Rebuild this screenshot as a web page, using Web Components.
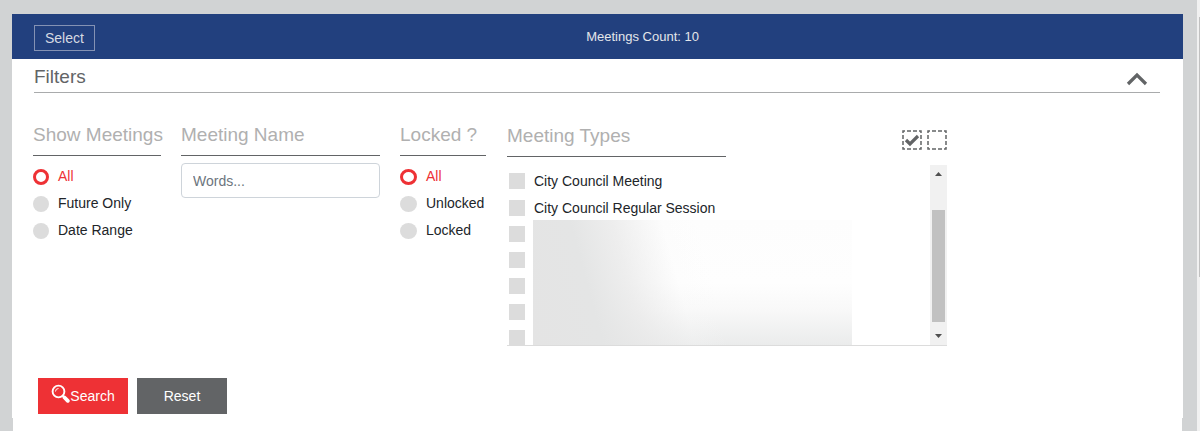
<!DOCTYPE html>
<html lang="en">
<head>
<meta charset="utf-8">
<title>Meetings</title>
<style>
html,body{margin:0;min-height:100%}
body{background:#d1d3d4;color:#212529;font:14px/20px "Liberation Sans",Arial,sans-serif}
</style>
</head>
<body>
<meetings-page>
  <meetings-bar slot="bar"></meetings-bar>
  <filter-panel slot="filters">
    <filter-group heading="Show Meetings" style="--w:128px">
      <choice-item type="radio" name="show" label="All" checked></choice-item>
      <choice-item type="radio" name="show" label="Future Only"></choice-item>
      <choice-item type="radio" name="show" label="Date Range"></choice-item>
    </filter-group>
    <filter-group heading="Meeting Name" style="--w:199px"><name-field></name-field></filter-group>
    <filter-group heading="Locked ?" style="--w:86px">
      <choice-item type="radio" name="locked" label="All" checked></choice-item>
      <choice-item type="radio" name="locked" label="Unlocked"></choice-item>
      <choice-item type="radio" name="locked" label="Locked"></choice-item>
    </filter-group>
    <meeting-types></meeting-types>
    <form-actions slot="actions"></form-actions>
  </filter-panel>
</meetings-page>
<script>
const define = (name, html, setup) => customElements.define(name, class extends HTMLElement {
  connectedCallback() {
    if (this.shadowRoot) return;
    this.attachShadow({mode: 'open'}).innerHTML = html;
    if (setup) setup(this, this.shadowRoot);
  }
});

define('meetings-page', `
<style>
:host{display:grid;grid-template-columns:1fr 3px;min-height:100vh}
main{display:flex;flex-direction:column;padding:14px 14px 0 12px}
.card{background:#fff}
.rest{flex:1;min-height:13px;margin:0 1px;background:#fff}
.track{background:#f1f1f1;padding:17px 0 0 2px}
.thumb{height:260px;background:#c1c1c1}
</style>
<main><div class="card"><slot name="bar"></slot><slot name="filters"></slot></div><div class="rest"></div></main>
<div class="track"><div class="thumb"></div></div>`);

define('meetings-bar', `
<style>
:host{display:grid;grid-template-columns:49% 1fr;align-items:center;height:45px;padding:0 22px;background:#22407e;color:#e4e6ea}
button{justify-self:start;box-sizing:border-box;height:26px;margin-top:2px;padding:0 10px;border:1px solid #8492b4;background:none;color:#d6dae2;font:inherit}
span{font-size:13px}
</style>
<button type="button">Select</button><span>Meetings Count: 10</span>`);

define('filter-panel', `
<style>
:host{display:block;padding:0 23px 4px 21px}
header{display:flex;justify-content:space-between;align-items:center;height:33px;margin-left:1px;border-bottom:1px solid #a9abac}
h1{margin:0;padding-top:2px;font-size:19px;line-height:24px;font-weight:400;color:#626466}
header button{display:flex;border:0;padding:0;margin:6px 12px 0 0;background:none}
.groups{display:flex;flex-wrap:wrap;align-items:flex-start;gap:20px;padding-top:30px}
</style>
<header><h1>Filters</h1><button type="button" aria-label="Collapse filters"><svg width="22" height="14" viewBox="0 0 22 14"><path d="M2 12 11 3l9 9" fill="none" stroke="#626466" stroke-width="3.2"/></svg></button></header>
<div class="groups"><slot></slot></div>
<slot name="actions"></slot>`);

define('filter-group', `
<style>
:host{display:block;width:var(--w)}
h2{margin:0 0 7px;padding-bottom:8px;border-bottom:1px solid #626466;font-size:19px;line-height:24px;font-weight:400;color:#b0b0b0;white-space:nowrap}
</style>
<h2></h2><slot></slot>`, (el, root) => { root.querySelector('h2').textContent = el.getAttribute('heading'); });

define('choice-item', `
<style>
:host{display:block}
label{display:flex;align-items:flex-start;gap:9px;height:27px;white-space:nowrap}
input{appearance:none;box-sizing:border-box;flex:none;width:16px;height:16px;margin:6px 0 0;background:#dcdcdc}
input[type=radio]{border-radius:50%}
input[type=radio]:checked{background:#fff;border:3px solid #ee3135}
input[type=radio]:checked + span{color:#ee3135}
span{line-height:26px}
:host([type=checkbox]) label{height:26px}
:host([type=checkbox]:first-child) label{height:27px}
:host([type=checkbox]) input{margin-top:5px}
:host([name=locked]) input{width:17px}
</style>
<label><input><span></span></label>`, (el, root) => {
  const input = root.querySelector('input');
  input.type = el.getAttribute('type');
  input.name = el.getAttribute('name');
  input.checked = el.hasAttribute('checked');
  root.querySelector('span').textContent = el.getAttribute('label') || '';
  if (!el.getAttribute('label')) input.setAttribute('aria-label', 'Meeting type');
});

define('name-field', `
<style>
:host{display:block}
input{box-sizing:border-box;width:100%;height:35px;padding:0 11px;border:1px solid #ced4da;border-radius:4px;background:#fff;color:#495057;font:inherit}
input::placeholder{color:#6c757d;opacity:1}
</style>
<input type="text" aria-label="Meeting name" placeholder="Words...">`);

define('meeting-types', `
<style>
:host{display:block;width:440px;margin-left:1px}
header{display:flex;justify-content:space-between;align-items:flex-start}
h2{width:219px;margin:0;padding:1px 0 8px;border-bottom:1px solid #626466;font-size:19px;line-height:24px;font-weight:400;color:#b0b0b0}
.tools{display:flex;gap:5px;padding-top:7px}
.tools button{display:flex;padding:0;border:0;background:none}
.list{display:grid;grid-template-columns:1fr 17px;height:180px;margin-top:8px;overflow:hidden;border-bottom:1px solid #dcdcdc}
.items{position:relative;padding:3px 0 0 2px}
.haze{position:absolute;left:26px;top:55px;width:319px;height:126px;
background:linear-gradient(75deg,#e4e4e4 0,#e4e5e5 20%,#e8e8e8bb 32%,#f8f8f833 46%,#ffffff00 56%),linear-gradient(to bottom,#fdfdfd 0,#fefefe 50%,#f9f9f9 70%,#eaebeb 100%)}
.bar{display:flex;flex-direction:column;align-items:center;background:#f1f1f1}
.thumb{width:13px;height:112px;margin-top:28px;background:#c1c1c1}
.bar svg{display:block}
</style>
<header><h2>Meeting Types</h2><div class="tools">
<button type="button" aria-label="Select all"><svg width="20" height="20" viewBox="0 0 20 20" fill="none" stroke="#626466"><path d="M1 1h18v18H1z" stroke-width="1.5" stroke-dasharray="4 2" stroke-dashoffset="2"/><path d="m4 10 4 4 8-8" stroke-width="3.2"/></svg></button>
<button type="button" aria-label="Clear all"><svg width="20" height="20" viewBox="0 0 20 20" fill="none" stroke="#626466"><path d="M1 1h18v18H1z" stroke-width="1.5" stroke-dasharray="4 2" stroke-dashoffset="2"/></svg></button>
</div></header>
<div class="list"><div class="items">
<choice-item type="checkbox" name="t1" label="City Council Meeting"></choice-item>
<choice-item type="checkbox" name="t2" label="City Council Regular Session"></choice-item>
<choice-item type="checkbox" name="t3"></choice-item>
<choice-item type="checkbox" name="t4"></choice-item>
<choice-item type="checkbox" name="t5"></choice-item>
<choice-item type="checkbox" name="t6"></choice-item>
<choice-item type="checkbox" name="t7"></choice-item>
<div class="haze"></div>
</div><div class="bar"><svg width="17" height="17"><path d="M5 11h7L8.500 7z" fill="#505050"/></svg><div class="thumb"></div><svg width="17" height="24"><path d="M5 12h7l-3.500 4z" fill="#505050"/></svg></div></div>`);

define('form-actions', `
<style>
:host{display:flex;gap:9px;padding:32px 0 0 5px}
button{display:flex;align-items:center;justify-content:center;width:90px;height:36px;padding:0;border:0;background:#626466;color:#fff;font:inherit}
.search{background:#ee3135}
.search svg{margin-bottom:5px}
</style>
<button type="submit" class="search"><svg width="19" height="19" viewBox="0 0 19 19" fill="none" stroke="#fff"><circle cx="7.500" cy="7.500" r="5.900" stroke-width="1.900"/><path d="M4.500 7.500A3 3 0 0 1 7.500 4.500" stroke-width="1"/><path d="m11.500 11.500 2 2" stroke-width="2"/><path d="m13.500 13.500 3.300 3.300" stroke-width="3.800" stroke-linecap="round"/></svg><span>Search</span></button>
<button type="reset">Reset</button>`);
</script>
</body>
</html>
